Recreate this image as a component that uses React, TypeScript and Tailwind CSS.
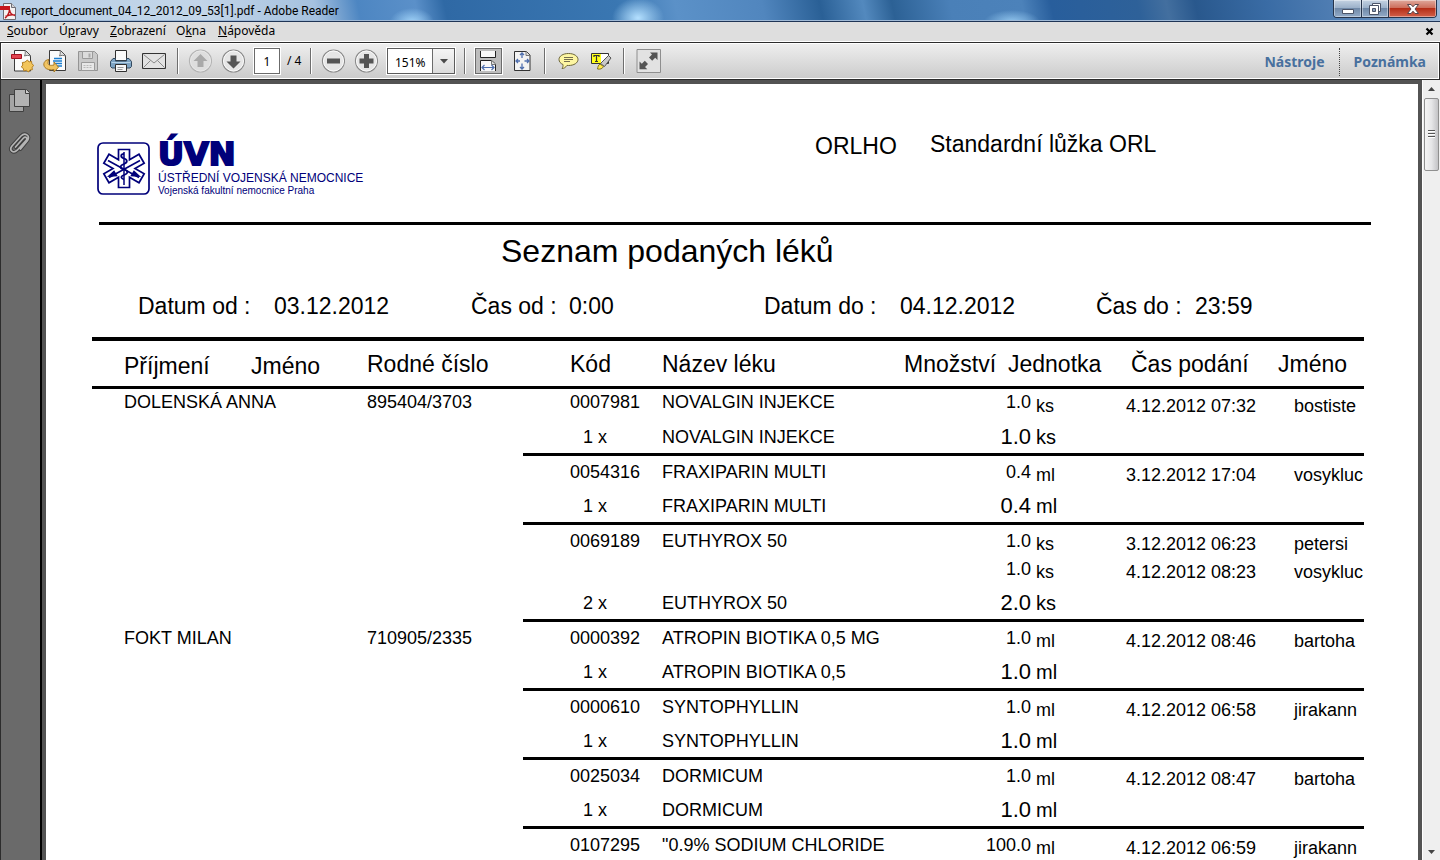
import React from "react";

type Detail = { qty: string; unit: string; time: string; user: string };
type Item = { code: string; drug: string; total?: string; count?: string; sumName?: string; unit: string; details: Detail[] };
type Patient = { name: string; id: string; items: Item[] };

const patients: Patient[] = [
  {
    name: "DOLENSKÁ ANNA",
    id: "895404/3703",
    items: [
      { code: "0007981", drug: "NOVALGIN INJEKCE", sumName: "NOVALGIN INJEKCE", count: "1 x", total: "1.0", unit: "ks", details: [{ qty: "1.0", unit: "ks", time: "4.12.2012 07:32", user: "bostiste" }] },
      { code: "0054316", drug: "FRAXIPARIN MULTI", sumName: "FRAXIPARIN MULTI", count: "1 x", total: "0.4", unit: "ml", details: [{ qty: "0.4", unit: "ml", time: "3.12.2012 17:04", user: "vosykluc" }] },
      {
        code: "0069189", drug: "EUTHYROX 50", sumName: "EUTHYROX 50", count: "2 x", total: "2.0", unit: "ks",
        details: [
          { qty: "1.0", unit: "ks", time: "3.12.2012 06:23", user: "petersi" },
          { qty: "1.0", unit: "ks", time: "4.12.2012 08:23", user: "vosykluc" },
        ],
      },
    ],
  },
  {
    name: "FOKT MILAN",
    id: "710905/2335",
    items: [
      { code: "0000392", drug: "ATROPIN BIOTIKA 0,5 MG", sumName: "ATROPIN BIOTIKA 0,5", count: "1 x", total: "1.0", unit: "ml", details: [{ qty: "1.0", unit: "ml", time: "4.12.2012 08:46", user: "bartoha" }] },
      { code: "0000610", drug: "SYNTOPHYLLIN", sumName: "SYNTOPHYLLIN", count: "1 x", total: "1.0", unit: "ml", details: [{ qty: "1.0", unit: "ml", time: "4.12.2012 06:58", user: "jirakann" }] },
      { code: "0025034", drug: "DORMICUM", sumName: "DORMICUM", count: "1 x", total: "1.0", unit: "ml", details: [{ qty: "1.0", unit: "ml", time: "4.12.2012 08:47", user: "bartoha" }] },
      { code: "0107295", drug: "\"0.9% SODIUM CHLORIDE", unit: "ml", details: [{ qty: "100.0", unit: "ml", time: "4.12.2012 06:59", user: "jirakann" }] },
    ],
  },
];

function TitleBar() {
  return (
    <header className="flex h-[22px] shrink-0 items-start justify-between border-b border-[#1f3556] bg-[radial-gradient(ellipse_22px_14px_at_412px_22px,#9fd2f8,transparent),radial-gradient(ellipse_26px_20px_at_638px_18px,#b4e0ff,transparent),radial-gradient(ellipse_28px_12px_at_1012px_22px,#92c6ee,transparent),linear-gradient(78deg,#b9cfe6_0%,#c3d6e9_14%,#a5c1df_22%,#4d86c2_25%,#5b90c9_29%,#2f69a5_31%,#3a77b2_43%,#5b91c8_47%,#5186be_53%,#2a6096_57%,#5389be_60%,#2c6195_62%,#4a80b8_66%,#4c82ba_71%,#285e9c_73%,#2e6199_79%,#436f9f_81%,#29588d_83%,#3a6ca5_88%,#5b87ba_95%,#9db9d8_100%)] shadow-[inset_0_-1px_0_#9fb9d6]">
      <div className="flex h-[21px] items-center">
        <svg width="17" height="20" viewBox="0 0 17 20" className="mr-1 shrink-0" aria-hidden="true">
          <path d="M3.500 2.500h8l4 4v12h-12z" fill="#f4f1f1" stroke="#6d6d74" />
          <path d="M11.500 2.500v4h4" fill="#d5d5d8" stroke="#6d6d74" />
          <path d="M0 5h10v4H0z" fill="#c5161d" />
          <path d="M5 17c2-1 4.500-5 4.500-8.500M9.500 8.500c.3 3 2.500 5.500 5.500 6M5.500 15.500c3-1.700 6-2 9.500-1.500" fill="none" stroke="#b9151b" strokeWidth="1.500" />
        </svg>
        <h1 className="font-['Roboto'] text-xs whitespace-nowrap">report_document_04_12_2012_09_53[1].pdf - Adobe Reader</h1>
      </div>
      <div className="mr-[3px] flex h-[18px] overflow-hidden rounded-b-[4px] border border-t-0 border-[#26344b]">
        <button aria-label="Minimalizovat" className="flex w-[28px] items-center justify-center border-r border-[#26344b] bg-[linear-gradient(#c5d3e3,#9cb1ca_45%,#7089a8_50%,#93abc8)] shadow-[inset_0_0_0_1px_#ffffff66]">
          <svg width="14" height="16" viewBox="0 0 14 16"><path d="M1.500 8.500h11v4h-11z" fill="#fff" stroke="#4b5468" /></svg>
        </button>
        <button aria-label="Obnovit" className="flex w-[27px] items-center justify-center border-r border-[#26344b] bg-[linear-gradient(#c5d3e3,#9cb1ca_45%,#7089a8_50%,#93abc8)] shadow-[inset_0_0_0_1px_#ffffff66]">
          <svg width="14" height="16" viewBox="0 0 14 16">
            <path d="M4.500 2.500h8v8h-8z" fill="#fff" stroke="#4b5468" />
            <path d="M1.500 4.500h9v9h-9z" fill="#fff" stroke="#4b5468" />
            <path d="M4.500 7.500h3v3h-3z" fill="#8ea3bf" stroke="#4b5468" />
          </svg>
        </button>
        <button aria-label="Zavřít" className="flex w-[47px] items-center justify-center bg-[linear-gradient(#e0a99c,#cd6f5c_45%,#b52e17_50%,#d2604a)] shadow-[inset_0_0_0_1px_#ffffff66]">
          <svg width="14" height="16" viewBox="0 0 14 16">
            <path d="M1.500 3.500h3.500l2 2.300 2-2.300h3.500L9 8l3.500 4.500H9l-2-2.300-2 2.300H1.500L5 8z" fill="#fff" stroke="#55444b" />
          </svg>
        </button>
      </div>
    </header>
  );
}

function MenuBar() {
  return (
    <nav className="flex h-[20px] shrink-0 items-center border-b border-white bg-[#dedede] pr-[6px] pb-px pl-[7px] text-xs">
      <a href="#soubor" className="w-[52px]"><u>S</u>oubor</a>
      <a href="#upravy" className="w-[51px]">Ú<u>p</u>ravy</a>
      <a href="#zobrazeni" className="w-[66px]"><u>Z</u>obrazení</a>
      <a href="#okna" className="w-[42px]">O<u>k</u>na</a>
      <a href="#napoveda"><u>N</u>ápověda</a>
      <button aria-label="Zavřít dokument" className="ml-auto">
        <svg width="9" height="9" viewBox="0 0 9 9"><path d="M1.500 1.500l6 6m0-6l-6 6" stroke="#000" strokeWidth="2.200" /></svg>
      </button>
    </nav>
  );
}

function Separator() {
  return <span className="h-[26px] w-[2px] shrink-0 border-r border-l border-r-white border-l-[#6e6e6e]" />;
}

function RoundButton({ label, d, faded }: { label: string; d: string; faded?: boolean }) {
  return (
    <button aria-label={label} className="shrink-0">
      <svg width="24" height="24" viewBox="0 0 24 24">
        <circle cx="12.500" cy="12" r="11" fill={faded ? "#dedede" : "#e6e6e6"} stroke={faded ? "#b4b4b4" : "#8b8b8b"} strokeWidth="1.200" />
        <circle cx="12.500" cy="12" r="10" fill="none" stroke={faded ? "#e8e8e8" : "#fafafa"} />
        <path d={d} fill={faded ? "#a9a9a9" : "#555"} />
      </svg>
    </button>
  );
}

function Toolbar() {
  return (
    <div className="flex h-[38px] shrink-0 items-center border border-[#2c2c2c] bg-linear-to-b from-[#efefef] to-[#cbcbcb] shadow-[inset_0_0_0_1px_#fff]">
      <div className="ml-[9px] flex items-center gap-[9px]">
        <button aria-label="Vytvořit PDF">
          <svg width="24" height="24" viewBox="0 0 24 24">
            <path d="M4.500 1.500h11l5 5v15.500h-16z" fill="#fbfbfb" stroke="#3b3b3b" />
            <path d="M15 1.500c.6 2 .2 3.500-.5 5.500 2-.8 4-.8 6 0" fill="#ddd" stroke="#777" />
            <path d="M1.500 5.500h10v4h-10z" fill="#e04450" stroke="#a51220" />
            <path d="M17.500 11l1.500 2 2.500-.8.3 2.500 2 1.800-1.800 1.700.4 2.500-2.500.3-1.600 2-1.900-1.700-2.500.6-.6-2.500-2-1.500 1.500-1.900-.5-2.500 2.600-.4z" fill="#f2c55c" stroke="#b58124" />
          </svg>
        </button>
        <button aria-label="Otevřít">
          <svg width="24" height="24" viewBox="0 0 24 24">
            <path d="M6.500 1.500h11l5 5v15h-16z" fill="#fbfbfb" stroke="#3b3b3b" />
            <path d="M17 1.500c.6 2 .2 3.500-.5 5.500 2-.8 4-.8 6 0" fill="#ddd" stroke="#777" />
            <path d="M11 9.500h8M10 12h9M11 14.500h8M14 17h5" stroke="#1a7ed0" strokeWidth="1.300" />
            <path d="M6 10.500c-5 .5-6.500 5-4 8 1.800 2.200 5.500 2.700 9 2v2.500l4.500-4.800-4.500-5.200v3c-3.500.8-6 .2-6-2 0-1.500.4-2.500 1-3.500z" fill="#f0c463" stroke="#a97a25" />
          </svg>
        </button>
        <button aria-label="Uložit">
          <svg width="24" height="24" viewBox="0 0 24 24">
            <path d="M2.500 2.500h16l3 3v16h-19z" fill="#c9c9c9" stroke="#949494" />
            <path d="M6.500 2.500h10v7h-10z" fill="#dcdcdc" stroke="#9a9a9a" />
            <path d="M12.500 4.500h2v4h-2z" fill="#aaa" />
            <path d="M5.500 13.500h13v8h-13z" fill="#e7e7e7" stroke="#9a9a9a" />
            <path d="M7.500 16.500h9M7.500 18.500h9" stroke="#b9b9b9" strokeDasharray="2 1" />
          </svg>
        </button>
        <button aria-label="Tisk">
          <svg width="24" height="24" viewBox="0 0 24 24">
            <path d="M6.500 1.500h11v10h-11z" fill="#fafafa" stroke="#2f2f2f" />
            <path d="M4 9.500h2.500v2.500h11V9.500H20l2.500 3v5L21 19H3l-1.500-1.500v-5z" fill="#7da3c3" stroke="#344a5f" />
            <path d="M2.500 13.500h19" stroke="#b6d3e8" />
            <path d="M6.500 15.500h11v7h-11z" fill="#f6f6f6" stroke="#2f2f2f" />
            <path d="M8.500 18.500h6M8.500 20.500h5" stroke="#999" />
          </svg>
        </button>
        <button aria-label="E-mail">
          <svg width="26" height="24" viewBox="0 0 26 24">
            <path d="M.5 4.500h23v15H.5z" fill="#e2e2e2" stroke="#333" />
            <path d="M1.500 5.500l10.500 8.500 10.500-8.500M1.500 18.500l7-7M22.500 18.500l-7-7" fill="none" stroke="#8a8a8a" />
          </svg>
        </button>
      </div>
      <div className="ml-[9px] flex items-center gap-[9px]">
        <Separator />
        <RoundButton label="Předchozí stránka" faded d="M12.500 5l7 7h-4v6h-6v-6h-4z" />
        <RoundButton label="Další stránka" d="M12.500 19.500l7-7h-4v-6h-6v6h-4z" />
        <label className="flex items-center gap-[7px] text-xs whitespace-nowrap">
          <input aria-label="Stránka" defaultValue="1" className="h-[26px] w-[26px] border border-[#6b6b6b] bg-white text-center text-xs outline outline-white" />
          <span className="w-[14px]">/ 4</span>
        </label>
      </div>
      <div className="ml-[9px] flex items-center gap-[9px]">
        <Separator />
        <RoundButton label="Zmenšit" d="M6 9.500h13v5H6z" />
        <RoundButton label="Zvětšit" d="M10 5h5v4.500h4.500v5H15V19h-5v-4.500H5.500v-5H10z" />
        <div className="relative h-[26px] w-[68px] border border-[#5c5c5c] bg-white outline outline-white">
          <select aria-label="Lupa" className="h-full w-full appearance-none pb-px pl-[7px] text-xs outline-none">
            <option>151%</option>
          </select>
          <span className="pointer-events-none absolute top-0 right-0 flex h-full w-[22px] items-center justify-center border-l border-[#6b6b6b] bg-linear-to-b from-[#f5f5f5] to-[#dcdcdc]">
            <svg width="8" height="5" viewBox="0 0 8 5"><path d="M0 0h8L4 4.500z" fill="#4a4a4a" /></svg>
          </span>
        </div>
        <Separator />
      </div>
      <div className="ml-[9px] flex items-center">
        <button aria-label="Na šířku okna" className="flex h-[26px] w-[27px] items-center justify-center border border-[#6b6b6b] bg-[#bdbdbd] outline outline-white">
          <svg width="19" height="24" viewBox="0 0 19 24">
            <path d="M1.500 2v6.500h15V2" fill="#f8f8f8" stroke="#222" />
            <path d="M1.500 22v-10.500h11l4 3.500v7z" fill="#f8f8f8" />
            <path d="M1.500 22v-10.500h11l4 3.500v7" fill="none" stroke="#222" />
            <path d="M12.500 11.500v4h4" fill="#ddd" stroke="#777" />
            <path d="M3 18.500h12M5.500 16L3 18.500 5.500 21M12.500 16l2.500 2.500-2.500 2.500" fill="none" stroke="#4f6fae" strokeWidth="1.200" />
          </svg>
        </button>
        <button aria-label="Celá stránka" className="ml-[11px]">
          <svg width="19" height="22" viewBox="0 0 19 22">
            <path d="M1.500 1.500h12l3.500 3.500v15.500H1.500z" fill="#f3f3f3" stroke="#333" />
            <path d="M13 1.500v4h4" fill="#ddd" stroke="#777" />
            <path d="M9 3v5M9 13.500v5.500M3 11h4M11.500 11H16M7 5l2-2 2 2M7 17l2 2 2-2M5 9l-2 2 2 2M14 9l2 2-2 2" fill="none" stroke="#4f6fae" strokeWidth="1.300" />
          </svg>
        </button>
      </div>
      <div className="ml-[12px] flex items-center gap-[11px]">
        <Separator />
        <button aria-label="Přidat poznámku">
          <svg width="22" height="20" viewBox="0 0 22 20">
            <path d="M11.500 2.500c5.500 0 9.500 2.600 9.500 6s-4 6-9.500 6l-1.500-.1C8.500 16.500 7 17.500 5 17.500c.8-1 1.200-2.300 1-4C3.500 12.500 2 10.700 2 8.500c0-3.400 4-6 9.500-6z" fill="#fdf6a2" stroke="#6c6538" />
            <path d="M7 6.500h9M7 8.500h9M7 10.500h6" stroke="#746e50" />
          </svg>
        </button>
        <button aria-label="Zvýraznit text">
          <svg width="22" height="20" viewBox="0 0 22 20">
            <path d="M1.500 2.500h17v10h-17z" fill="#fff" stroke="#333" />
            <path d="M2 3h9v9H2z" fill="#ffff1a" />
            <path d="M4 6V4.500h5V6M6.500 4.500v6M5 10.500h3" fill="none" stroke="#333" strokeWidth="1.200" />
            <path d="M18.500 4.500l2.500 2.500-6.500 8.500-4-3z" fill="#c9c9c9" stroke="#555" />
            <path d="M10 13l3.500 2.500c-1 2.300-3.500 3-6 2.500.3-2 .8-4 2.500-5z" fill="#ffe84a" stroke="#817421" />
          </svg>
        </button>
        <Separator />
        <button aria-label="Režim čtení">
          <svg width="25" height="24" viewBox="0 0 25 24">
            <path d="M1 .5h23.500v23H1z" fill="#e2e2e2" stroke="#8e8e8e" />
            <path d="M14 3.500h7.500V11l-2.300-2.300-3 3-3.200-3.200 3-3z" fill="#555" />
            <path d="M3.500 12.500l2.300 2.300 3-3 3.200 3.200-3 3 2.300 2.300H3.500z" fill="#555" />
          </svg>
        </button>
      </div>
      <div className="ml-auto flex items-center pt-px pr-[13px] text-sm font-bold text-[#48709e]">
        <button>Nástroje</button>
        <span className="mx-[14px] h-[28px] border-l border-dotted border-[#444]" />
        <button>Poznámka</button>
      </div>
    </div>
  );
}

function SidePanel() {
  return (
    <aside className="flex w-[42px] shrink-0 flex-col items-center gap-[16px] border-r-2 border-l border-r-black border-l-[#2c2c2c] bg-[#6a6a6a] pt-[8px] pr-px">
      <button aria-label="Miniatury stránek">
        <svg width="24" height="26" viewBox="0 0 24 26">
          <path d="M1.500 6.500h14v17h-14z" fill="#a5a5a5" stroke="#404040" />
          <path d="M6.500 1.500h12l3 3v14h-15z" fill="#b3b3b3" stroke="#404040" />
          <path d="M17.500 1.500v4h4" fill="#d0d0d0" stroke="#404040" />
        </svg>
      </button>
      <button aria-label="Přílohy">
        <svg width="24" height="26" viewBox="0 0 24 26" fill="none" strokeLinecap="round">
          <path d="M7.500 17l8-9c2-2 4.500 0 2.700 2.200l-9 10c-4 4-8.500 0-5.200-4.200l9-10c4-4 9.500-.5 6.500 4.500l-7 8.500" stroke="#3e3e3e" strokeWidth="3.600" />
          <path d="M7.500 17l8-9c2-2 4.500 0 2.700 2.200l-9 10c-4 4-8.500 0-5.200-4.200l9-10c4-4 9.500-.5 6.500 4.500l-7 8.500" stroke="#b5b5b5" strokeWidth="1.700" />
        </svg>
      </button>
    </aside>
  );
}

function HospitalLogo() {
  return (
    <div className="flex items-start text-[#00007a]">
      <svg width="54" height="54" viewBox="0 0 54 54" className="mt-[4px] mr-[7px]" aria-hidden="true">
        <rect x="1" y="1" width="51" height="51" rx="5" fill="none" stroke="#00007a" strokeWidth="1.700" />
        <path d="M21.500 7.500h11v10.200l9.500-5.500 5.200 9L38 26.500l9.200 5.300-5.200 9-9.500-5.500v10.200h-11V35.300L12 40.800l-5.200-9L16 26.500l-9.200-5.300 5.200-9 9.500 5.500z" fill="none" stroke="#00007a" strokeWidth="1.700" />
        <path d="M11 18.500l31 17M43 18.500l-31 17" stroke="#00007a" strokeWidth="1.600" />
        <path d="M12 34l5-4.500 2.500 4zM42 34l-5-4.500-2.500 4z" fill="#00007a" stroke="#00007a" strokeWidth="1.500" />
        <path d="M27 10v33" stroke="#00007a" strokeWidth="1.500" />
        <path d="M27 12c-4 0-3.500 3.500 0 4.500s4 4 0 5.500-5 4 0 5.500 4 4 0 5.500-3 3.500 0 4.500" fill="none" stroke="#00007a" strokeWidth="1.800" />
      </svg>
      <div className="whitespace-nowrap">
        <p className="font-['DejaVu_Sans'] text-[32px] leading-[33px] font-bold [-webkit-text-stroke:2px_#00007a]">ÚVN</p>
        <p className="text-xs leading-[14px]">ÚSTŘEDNÍ VOJENSKÁ NEMOCNICE</p>
        <p className="text-[10px] leading-[11px]">Vojenská fakultní nemocnice Praha</p>
      </div>
    </div>
  );
}

function ReportTable() {
  return (
    <table className="mt-[15px] mr-[54px] ml-[46px] table-fixed border-separate border-spacing-0 self-stretch text-left text-lg whitespace-nowrap">
      <colgroup>
        <col className="w-[159px]" />
        <col className="w-[116px]" />
        <col className="w-[156px]" />
        <col className="w-[47px]" />
        <col className="w-[92px]" />
        <col className="w-[242px]" />
        <col className="w-[104px]" />
        <col className="w-[28px]" />
        <col className="w-[90px]" />
        <col className="w-[152px]" />
        <col />
      </colgroup>
      <thead>
        <tr className="h-[52px] align-top text-[23px] [&>th]:border-t-4 [&>th]:border-b-[3px] [&>th]:border-black [&>th]:px-0 [&>th]:pb-0 [&>th]:align-top [&>th]:font-normal">
          <th className="pt-[6px] indent-[32px] leading-[39px]">Příjmení</th>
          <th className="pt-[6px] leading-[39px]">Jméno</th>
          <th className="pt-[2px] leading-[43px]" colSpan={2}>Rodné číslo</th>
          <th className="pt-[2px] leading-[43px]">Kód</th>
          <th className="pt-[2px] leading-[43px]">Název léku</th>
          <th className="pt-[2px] leading-[43px]">Množství</th>
          <th className="pt-[2px] leading-[43px]" colSpan={2}>Jednotka</th>
          <th className="pt-[2px] indent-[5px] leading-[43px]">Čas podání</th>
          <th className="pt-[2px] leading-[43px]">Jméno</th>
        </tr>
      </thead>
      <tbody>
        {patients.map((patient, p) =>
          patient.items.map((item, i) => (
            <React.Fragment key={item.code}>
              {item.details.map((row, d) => {
                const opening = p === 0 && i === 0;
                const high = opening ? "p-0 pt-[5px]" : "p-0 pt-[8px]";
                const low = opening ? "p-0 pt-[9px]" : "p-0 pt-[11px]";
                return (
                  <tr key={d} className={opening ? "h-[26px] align-top leading-4" : "h-[28px] align-top leading-4"}>
                    <td colSpan={2} className={high}><span className="pl-[32px]">{i + d === 0 ? patient.name : ""}</span></td>
                    <td className={high}>{i + d === 0 ? patient.id : ""}</td>
                    <td className="p-0" />
                    <td className={high}>{d === 0 ? item.code : ""}</td>
                    <td className={high}>{d === 0 ? item.drug : ""}</td>
                    <td colSpan={2} className={high}><span className="block pr-[5px] text-right">{row.qty}</span></td>
                    <td className={low}>{row.unit}</td>
                    <td className={low}>{row.time}</td>
                    <td className={low}><span className="pl-[16px]">{row.user}</span></td>
                  </tr>
                );
              })}
              {item.total && (
                <tr className="h-[41px] align-top leading-6 [&>td]:px-0 [&>td]:pt-[10px] [&>td]:pb-0 [&>td.ruled]:border-b-[3px] [&>td.ruled]:border-black">
                  <td colSpan={3} />
                  <td className="ruled" />
                  <td className="ruled"><span className="pl-[13px]">{item.count}</span></td>
                  <td className="ruled">{item.sumName}</td>
                  <td className="ruled text-[22px] leading-6" colSpan={2}><span className="block pr-[5px] text-right">{item.total}</span></td>
                  <td className="ruled text-xl leading-6">{item.unit}</td>
                  <td className="ruled" colSpan={2} />
                </tr>
              )}
            </React.Fragment>
          )),
        )}
      </tbody>
    </table>
  );
}

function ReportPage() {
  return (
    <main className="flex min-w-0 flex-1 flex-col overflow-hidden bg-white font-['Liberation_Sans',sans-serif]">
      <div className="mr-[47px] ml-[53px] flex h-[141px] shrink-0 items-start border-b-[3px] border-black pt-[54px]">
        <div className="-ml-[2px] w-[718px]"><HospitalLogo /></div>
        <p className="w-[115px] text-[23px] leading-[16px]">ORLHO</p>
        <p className="text-[23px] leading-[12px] whitespace-nowrap">Standardní lůžka ORL</p>
      </div>
      <h2 className="mt-[6px] ml-[455px] text-[32px] leading-10">Seznam podaných léků</h2>
      <dl className="mt-[19px] ml-[92px] grid grid-cols-[136px_197px_98px_195px_136px_196px_99px_1fr] text-[23px] leading-8 whitespace-nowrap">
        <dt>Datum od :</dt><dd>03.12.2012</dd>
        <dt>Čas od :</dt><dd>0:00</dd>
        <dt>Datum do :</dt><dd>04.12.2012</dd>
        <dt>Čas do :</dt><dd>23:59</dd>
      </dl>
      <ReportTable />
    </main>
  );
}

function ScrollBar() {
  return (
    <div className="ml-[4px] flex w-[18px] shrink-0 flex-col border-l border-white bg-[#efefef]">
      <button aria-label="Posunout nahoru" className="flex h-[18px] shrink-0 items-center justify-center">
        <svg width="7" height="4" viewBox="0 0 7 4"><path d="M0 4h7L3.500 0z" fill="#444" /></svg>
      </button>
      <div className="mx-px flex h-[73px] shrink-0 items-center justify-center rounded-[2px] border border-[#8f8f8f] bg-linear-to-r from-[#f5f5f5] via-[#e6e6e8] to-[#c3c3c6]">
        <svg width="8" height="9" viewBox="0 0 8 9"><path d="M0 .5h7M0 3.500h7M0 6.500h7" stroke="#555" /><path d="M0 1.500h7M0 4.500h7M0 7.500h7" stroke="#fff" /></svg>
      </div>
      <button aria-label="Posunout dolů" className="mt-auto flex h-[17px] shrink-0 items-center justify-center">
        <svg width="7" height="4" viewBox="0 0 7 4"><path d="M0 0h7L3.500 4z" fill="#444" /></svg>
      </button>
    </div>
  );
}

export default function App() {
  return (
    <div className="flex h-screen flex-col overflow-hidden bg-[#535353] font-['Noto_Sans',sans-serif] text-black">
      <TitleBar />
      <MenuBar />
      <Toolbar />
      <div className="flex min-h-0 flex-1">
        <SidePanel />
        <div className="flex min-w-0 flex-1 pt-[4px] pl-[4px]">
          <ReportPage />
        </div>
        <ScrollBar />
      </div>
    </div>
  );
}
